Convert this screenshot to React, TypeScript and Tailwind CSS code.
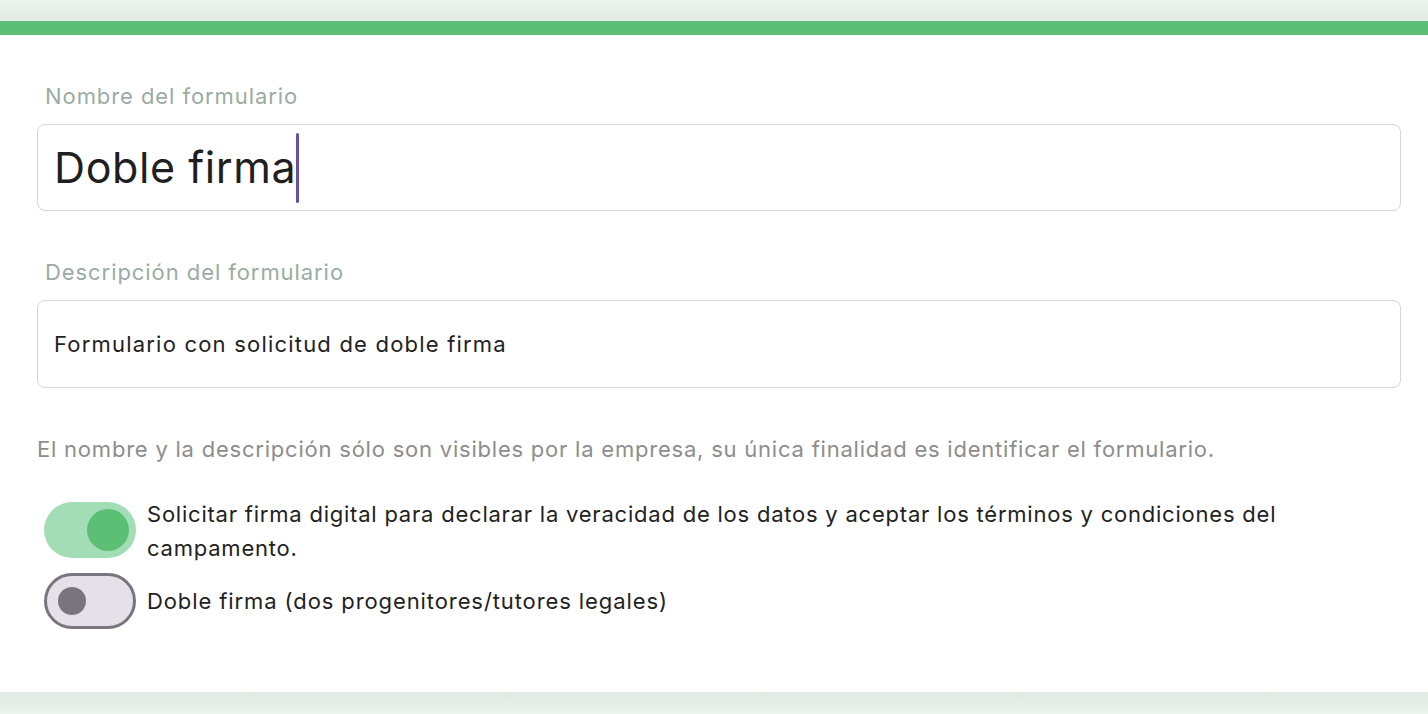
import { useState } from 'react'

// Form settings card: name, description and signature toggles.
export default function App() {
  const [digitalSign, setDigitalSign] = useState(true)
  const [doubleSign, setDoubleSign] = useState(false)

  return (
    <div className="w-[1428px] h-[714px] bg-[#eaf3ed] flex flex-col font-['Inter',_'Liberation_Sans',_sans-serif] overflow-hidden">
      <div className="h-[21px] bg-gradient-to-b from-[#eaf3ed] to-[#e2ece5] shrink-0" />
      <div className="h-[14px] bg-[#5bbf76] shrink-0" />
      <div className="h-[657px] bg-white shrink-0 pt-[48px] pl-[37px] pr-[27px] shadow-[0_2px_3px_rgba(0,0,0,0.08)]">
        <Label text="Nombre del formulario" />
        <div className="mt-[15px] h-[87px] border border-[#d6d6d6] rounded-lg flex items-center px-[16px]">
          <span className="text-[43px] text-[#1f1f1f] tracking-[0.6px] leading-none">Doble firma</span>
          <span className="w-[3px] h-[70px] bg-[#6750a4] rounded-sm" />
        </div>

        <div className="mt-[48px]">
          <Label text="Descripción del formulario" />
        </div>
        <div className="mt-[15px] h-[88px] border border-[#d6d6d6] rounded-lg flex items-center px-[16px]">
          <span className="text-[22px] text-[#222] tracking-[1.2px]">Formulario con solicitud de doble firma</span>
        </div>

        <p className="mt-[48px] text-[22px] text-[#8d8d8d] leading-[26px] tracking-[0.78px]">
          El nombre y la descripción sólo son visibles por la empresa, su única finalidad es identificar el formulario.
        </p>

        <div className="mt-[40px] pl-[7px] flex flex-col gap-[8px]">
          <div className="flex items-start gap-[11px]">
            <Switch on={digitalSign} onClick={() => setDigitalSign(!digitalSign)} />
            <span className="text-[22px] text-[#222] leading-[34px] -mt-[5px] tracking-[0.78px]">
              Solicitar firma digital para declarar la veracidad de los datos y aceptar los términos y condiciones del campamento.
            </span>
          </div>
          <div className="flex items-center gap-[11px]">
            <Switch on={doubleSign} onClick={() => setDoubleSign(!doubleSign)} />
            <span className="text-[22px] text-[#222] leading-[34px] tracking-[0.9px]">Doble firma (dos progenitores/tutores legales)</span>
          </div>
        </div>
      </div>
      <div className="flex-1 bg-gradient-to-b from-[#e0ebe3] to-[#eaf3ed]" />
    </div>
  )
}

function Label({ text }: { text: string }) {
  return <div className="pl-[8px] text-[22px] leading-[26px] tracking-[0.93px] text-[#9aaca3]">{text}</div>
}

function Switch({ on, onClick }: { on: boolean; onClick: () => void }) {
  if (on) {
    return (
      <button onClick={onClick} className="w-[92px] h-[56px] rounded-full bg-[#a2ddb6] flex items-center justify-end pr-[7px] shrink-0">
        <span className="w-[42px] h-[42px] rounded-full bg-[#5bbf76]" />
      </button>
    )
  }
  return (
    <button onClick={onClick} className="w-[92px] h-[56px] rounded-full bg-[#e6e0e9] border-[3px] border-[#79747e] flex items-center pl-[11px] shrink-0">
      <span className="w-[28px] h-[28px] rounded-full bg-[#79747e]" />
    </button>
  )
}
